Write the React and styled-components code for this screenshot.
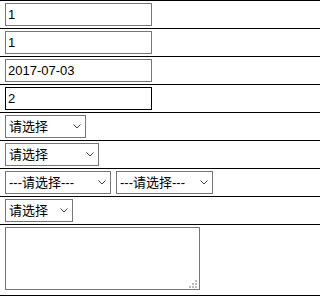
import React from 'react'
import styled, { createGlobalStyle } from 'styled-components'

const Global = createGlobalStyle`
  html, body { margin: 0; padding: 0; background: #fff; }
  body { font-family: "Liberation Sans", "Noto Sans CJK SC", sans-serif; font-size: 13px; }
`

const Form = styled.div`
  width: 100%;
  border-bottom: 1px solid #000;
`

const Row = styled.div`
  display: flex;
  align-items: flex-start;
  gap: 5px;
  border-top: 1px solid #000;
  padding: ${p => (p.tall ? '2px 0 5px 5px' : '2px 0 2px 5px')};
  height: ${p => (p.tall ? 'auto' : '23px')};
`

const TextInput = styled.input`
  box-sizing: border-box;
  width: 147px;
  height: 23px;
  margin: 0;
  padding: 1px 2px;
  border: 1px solid ${p => (p.dark ? '#000' : '#767676')};
  border-radius: 0;
  font-family: "Liberation Sans", "Noto Sans CJK SC", sans-serif;
  font-size: 13px;
  color: #000;
  background: #fff;
  outline: none;
`

const SelectWrap = styled.div`
  position: relative;
  width: ${p => p.w}px;
  height: 23px;
`

const Select = styled.select`
  appearance: none;
  -webkit-appearance: none;
  box-sizing: border-box;
  width: 100%;
  height: 23px;
  margin: 0;
  padding: 0 0 0 3px;
  border: 1px solid #767676;
  border-radius: 0;
  font-family: "Liberation Sans", "Noto Sans CJK SC", sans-serif;
  font-size: 13px;
  color: #000;
  background: #fff;
  outline: none;
`

const Chevron = styled.svg`
  position: absolute;
  right: 5px;
  top: 9px;
  pointer-events: none;
`

const MemoWrap = styled.div`
  position: relative;
  width: 195px;
  height: 63px;
`

const Memo = styled.textarea`
  box-sizing: border-box;
  width: 100%;
  height: 100%;
  margin: 0;
  padding: 2px;
  border: 1px solid #767676;
  border-radius: 0;
  font-family: "Liberation Sans", "Noto Sans CJK SC", sans-serif;
  font-size: 13px;
  display: block;
  resize: none;
  outline: none;
`

const Grip = styled.svg`
  position: absolute;
  right: 3px;
  bottom: 2px;
  pointer-events: none;
`

const Choice = ({ w, label }) => (
  <SelectWrap w={w}>
    <Select defaultValue="">
      <option value="">{label}</option>
    </Select>
    <Chevron width="8" height="5" viewBox="0 0 8 5">
      <path d="M0.5 0.5 L4 4 L7.5 0.5" fill="none" stroke="#444" strokeWidth="1" />
    </Chevron>
  </SelectWrap>
)

export default function App() {
  return (
    <>
      <Global />
      <Form>
        <Row><TextInput defaultValue="1" /></Row>
        <Row><TextInput defaultValue="1" /></Row>
        <Row><TextInput defaultValue="2017-07-03" /></Row>
        <Row><TextInput dark defaultValue="2" /></Row>
        <Row><Choice w={81} label="请选择" /></Row>
        <Row><Choice w={94} label="请选择" /></Row>
        <Row>
          <Choice w={106} label="---请选择---" />
          <Choice w={97} label="---请选择---" />
        </Row>
        <Row><Choice w={68} label="请选择" /></Row>
        <Row tall>
          <MemoWrap>
            <Memo />
            <Grip width="8" height="8" viewBox="0 0 8 8">
              <g fill="#bbb">
                <rect x="6" y="0" width="2" height="2" />
                <rect x="3" y="3" width="2" height="2" />
                <rect x="6" y="3" width="2" height="2" />
                <rect x="0" y="6" width="2" height="2" />
                <rect x="3" y="6" width="2" height="2" />
                <rect x="6" y="6" width="2" height="2" />
              </g>
            </Grip>
          </MemoWrap>
        </Row>
      </Form>
    </>
  )
}
